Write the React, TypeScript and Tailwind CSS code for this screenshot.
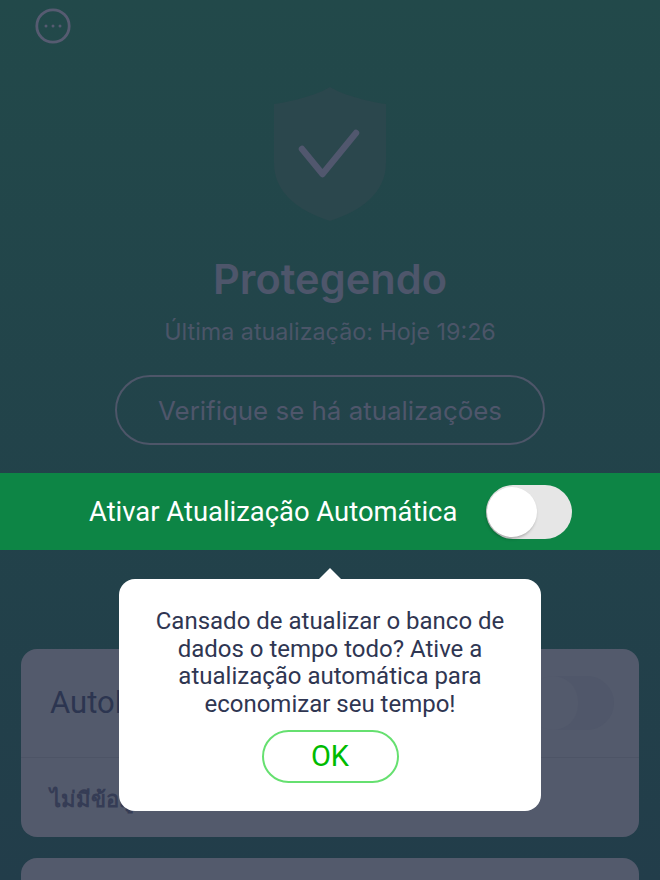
import React from "react";

const MenuIcon = () => (
  <svg width="36" height="36" viewBox="0 0 36 36" fill="none">
    <circle cx="18" cy="18" r="16.2" stroke="#565b71" strokeWidth="2.8" />
    <circle cx="11" cy="18" r="1.5" fill="#565b71" />
    <circle cx="18" cy="18" r="1.5" fill="#565b71" />
    <circle cx="25" cy="18" r="1.5" fill="#565b71" />
  </svg>
);

const ShieldIcon = () => (
  <svg width="114" height="134" viewBox="0 0 114 134" fill="none">
    <path
      d="M57 0 C46 7 22 14 1 17 V76 C1 106 26 124 57 134 C88 124 113 106 113 76 V17 C92 14 68 7 57 0 Z"
      fill="#2b474d"
    />
    <path d="M29 62 L49.5 87 L83 46" stroke="#51576e" strokeWidth="6.5" strokeLinecap="round" strokeLinejoin="round" />
  </svg>
);

export default function App() {
  return (
    <div className="relative w-[660px] h-[880px] overflow-hidden bg-gradient-to-b from-[#22494a] to-[#223d4a] font-[Inter,Roboto,sans-serif]">
      <div className="pl-[35px] pt-[8px] h-[87px]">
        <MenuIcon />
      </div>

      <div className="flex flex-col items-center">
        <ShieldIcon />
        <h1 className="mt-[33px] text-[41.6px] leading-[50px] font-semibold text-[#4e566b]">Protegendo</h1>
        <p className="mt-[14px] text-[23.3px] leading-[28px] text-[#4b5568]">Última atualização: Hoje 19:26</p>
        <div className="mt-[29px] flex h-[70px] w-[430px] items-center justify-center rounded-full border-2 border-[#4e5669]">
          <span className="pt-[2px] text-[25.9px] leading-[36px] text-[#4f566b]">Verifique se há atualizações</span>
        </div>
      </div>

      <div className="mt-[28px] flex h-[77px] items-center bg-[#0d8545] pl-[89px] font-[Roboto,sans-serif]">
        <span className="w-[397px] pt-[2px] text-[27.4px] text-white">Ativar Atualização Automática</span>
        <div className="flex h-[54px] w-[86px] rounded-full bg-[#e6e6e6]">
          <div className="ml-[1px] mt-[2px] h-[50px] w-[50px] rounded-full bg-white shadow-[-1px_2px_3px_rgba(0,0,0,0.25)]" />
        </div>
      </div>

      <div className="mt-[99px] flex flex-col gap-[21px] px-[21px]">
        <div className="h-[188px] rounded-[16px] bg-[#535a6c]">
          <div className="flex h-[109px] items-center justify-between border-b border-[#4d5466] pl-[29px] pr-[25px] font-[Roboto,sans-serif]">
            <span className="text-[31px] text-[#2c3550]">Autol</span>
            <div className="flex h-[54px] w-[86px] rounded-full bg-[#50576a]">
              <div className="h-[54px] w-[50px] rounded-full bg-[#535a6c]" />
            </div>
          </div>
          <p className="ml-[29px] mt-[24px] text-[22px] font-semibold text-[#353c55] font-['Noto_Sans',sans-serif]">ไม่มีข้อมู</p>
        </div>
        <div className="h-[120px] rounded-[16px] bg-[#535a6c]" />
      </div>

      <div className="absolute left-[119px] top-[579px] flex h-[232px] w-[422px] flex-col items-center rounded-[16px] bg-white pt-[29px] font-[Roboto,sans-serif]">
        <div className="absolute -top-[11px] left-[200px] h-0 w-0 border-x-[11px] border-b-[11px] border-x-transparent border-b-white" />
        <p className="w-[370px] text-center text-[24px] leading-[27.7px] text-[#2f3652]">
          Cansado de atualizar o banco de dados o tempo todo? Ative a atualização automática para economizar seu tempo!
        </p>
        <div className="mt-[11px] flex h-[53px] w-[137px] items-center justify-center rounded-full border-2 border-[#66e070]">
          <span className="text-[29px] text-[#00bb00]">OK</span>
        </div>
      </div>
    </div>
  );
}
